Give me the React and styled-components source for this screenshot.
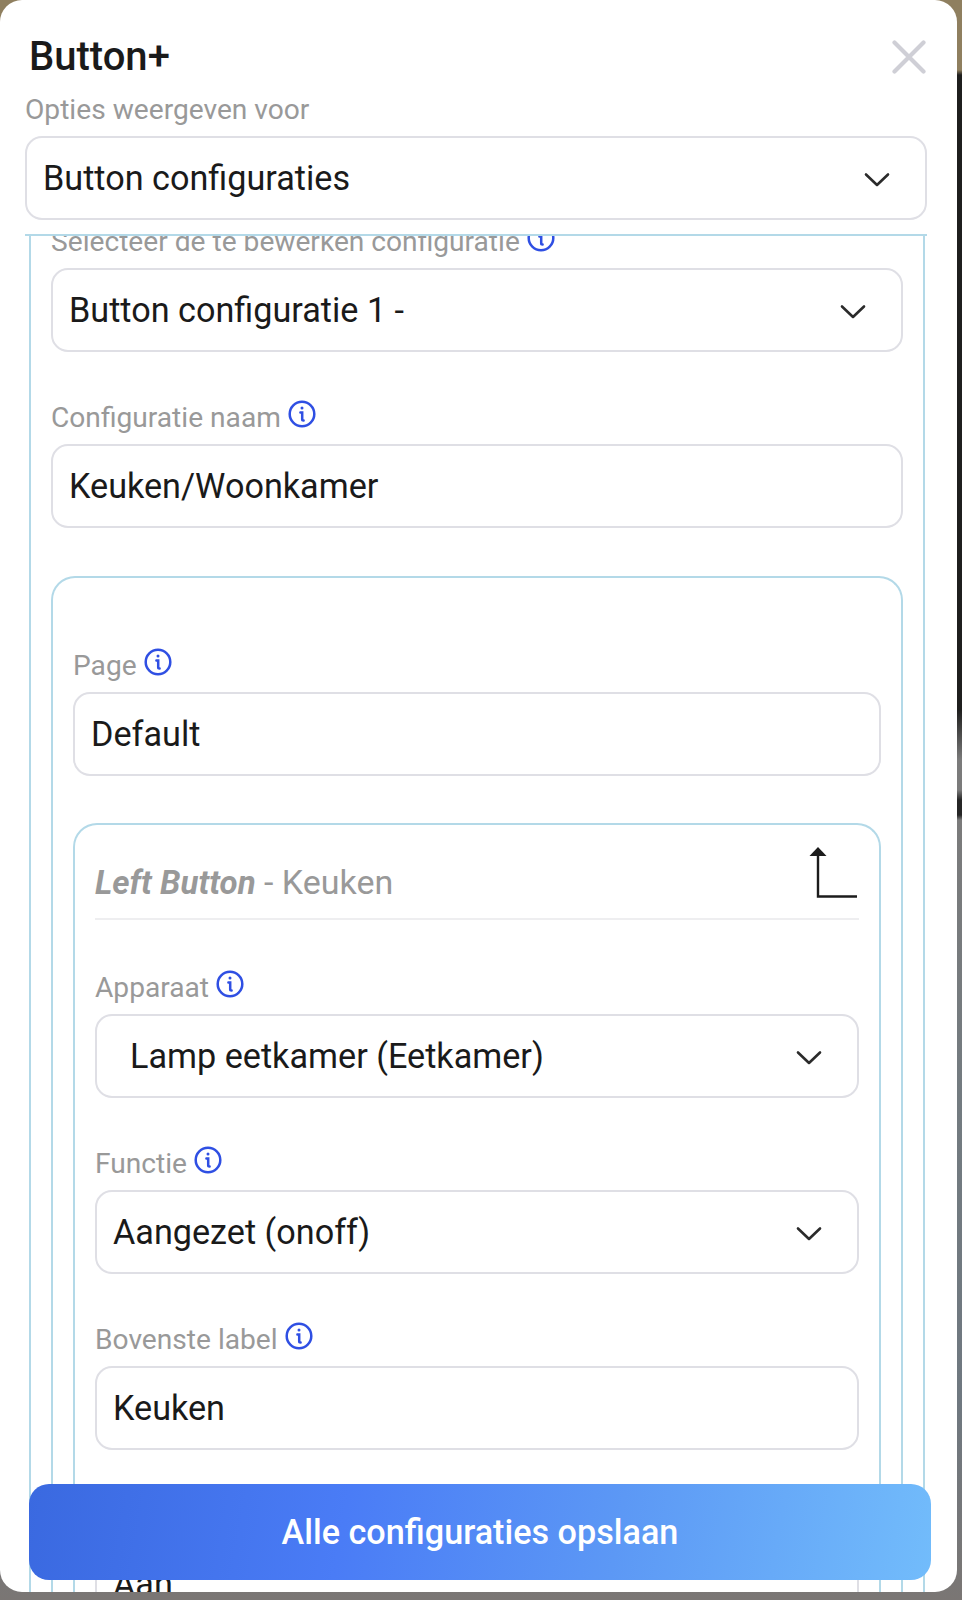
import React from "react";
import styled, { createGlobalStyle } from "styled-components";

const Global = createGlobalStyle`
  html, body { margin: 0; padding: 0; }
  body {
    width: 962px; height: 1600px; overflow: hidden;
    font-family: Roboto, "Noto Sans", sans-serif;
    background: linear-gradient(180deg, #8f7f5f 0, #8f7f5f 70px, #1f1f1e 75px, #1f1f1e 710px, #7b7b7b 760px, #7b7b7b 790px, #262626 800px, #262626 815px, #7b7b7b 820px, #737b80 1100px, #6f7880 1400px, #7a7674 1600px);
  }
`;

const Modal = styled.div`
  position: relative; width: 957px; height: 1592px; box-sizing: border-box;
  background: #fff; border-radius: 22px; overflow: hidden;
  display: flex; flex-direction: column; padding: 0 30px 0 25px;
`;
const Header = styled.div`
  display: flex; justify-content: space-between; align-items: center;
  height: 114px; padding-left: 4px; box-sizing: border-box; flex: none;
`;
const Title = styled.h1`
  margin: 0; font-size: 40px; font-weight: 500; color: #1a1a1a; line-height: 1;
`;
const Close = styled.button`
  border: 0; background: none; padding: 0; display: flex; margin-right: 1px;
`;
const TopLabel = styled.div`
  font-size: 28.15px; color: #999; line-height: 30px; margin-top: -19px; flex: none;
  height: 41px;
`;
const Box = styled.div`
  height: 84px; box-sizing: border-box; border: 2px solid #dfdfe5; border-radius: 17px;
  display: flex; align-items: center; justify-content: space-between;
  padding: 3px 34px 0 ${p => p.$pad || 16}px; background: #fff; flex: none;
  font-size: 34.2px; color: #1a1a1a;
`;
const BoxText = styled.span`
  margin-top: -4px;
`;
const Scroll = styled.div`
  flex: 1; min-height: 0; margin-top: 14px; border-top: 2px solid #b3d9e8;
  overflow: hidden; padding: 0 2px 0 4px;
`;
const Outer = styled.div`
  border: 2px solid #b3d9e8; border-top: 0; border-bottom: 0;
  padding: 0 20px; margin-top: -10px; height: 1500px;
`;
const Field = styled.div`
  display: flex; flex-direction: column; margin-bottom: ${p => p.$mb ?? 50}px;
`;
const Label = styled.div`
  display: flex; align-items: center; gap: 7px; height: 30px; margin-bottom: 12px;
  font-size: 28.15px; color: #999; white-space: nowrap;
  & > svg { margin-top: -7px; }
`;
const Card = styled.div`
  border: 2px solid #b3d9e8; border-radius: 24px; padding: ${p => p.$top}px 20px 0;
  border-bottom: 0;
`;
const CardHead = styled.div`
  display: flex; justify-content: space-between; align-items: flex-end;
  height: 95px; box-sizing: border-box; border-bottom: 2px solid #eeeef0;
  padding-bottom: 20px; margin-bottom: 52px;
  font-size: 34px; color: #999;
  & > svg { margin: 0 4px -1px 0; }
`;
const CardTitle = styled.div`
  line-height: 36px; margin-bottom: -3px;
  b { font-weight: 700; font-style: italic; font-size: 33px; }
`;
const SaveButton = styled.button`
  position: absolute; left: 29px; top: 1484px; width: 902px; height: 96px;
  border: 0; border-radius: 20px; color: #fff; font: 500 34.2px Roboto, sans-serif;
  background: linear-gradient(100deg, #3a69e0 0%, #4a7cf6 35%, #5c98f5 65%, #72bcfb 100%);
`;

const Info = () => (
  <svg width="28" height="28" viewBox="0 0 28 28" fill="none" stroke="#2f4fe3" strokeWidth="2.5" strokeLinecap="round">
    <circle cx="14" cy="14" r="12.3" />
    <path d="M12.4 12.6H14.2V19.4Q14.2 20.4 15.6 20.4" />
    <circle cx="14" cy="8" r="1.5" fill="#2f4fe3" stroke="none" />
  </svg>
);
const Chevron = () => (
  <svg width="28" height="16" viewBox="0 0 28 16" fill="none" stroke="#2b2b2b" strokeWidth="2.6" strokeLinecap="round" strokeLinejoin="round">
    <path d="M3 2.5 14 13 25 2.5" />
  </svg>
);
const X = () => (
  <svg width="34" height="34" viewBox="0 0 34 34" fill="none" stroke="#cfcfd6" strokeWidth="4.2" strokeLinecap="round">
    <path d="M2.5 2.5 31.5 31.5M31.5 2.5 2.5 31.5" />
  </svg>
);
const CornerArrow = () => (
  <svg width="44" height="52" viewBox="0 0 44 52" fill="none" overflow="visible">
    <path d="M7 8V49.5H46" stroke="#1c1c1c" strokeWidth="2.4" />
    <path d="M7 0 15.5 9H-1.5Z" fill="#1c1c1c" />
  </svg>
);

const Row = ({ label, value, select, pad, info = true, mb }) => (
  <Field $mb={mb}>
    <Label>{label}{info && <Info />}</Label>
    <Box $pad={pad}>
      <BoxText>{value}</BoxText>
      {select && <Chevron />}
    </Box>
  </Field>
);

export default function App() {
  return (
    <>
      <Global />
      <Modal>
        <Header>
          <Title>Button+</Title>
          <Close aria-label="Sluiten"><X /></Close>
        </Header>
        <TopLabel>Opties weergeven voor</TopLabel>
        <Box $pad={16}>
          <BoxText>Button configuraties</BoxText>
          <Chevron />
        </Box>
        <Scroll>
          <Outer>
            <Row label="Selecteer de te bewerken configuratie" value="Button configuratie 1 -" select />
            <Row label="Configuratie naam" value="Keuken/Woonkamer" mb={48} />
            <Card $top={72}>
              <Row label="Page" value="Default" mb={47} />
              <Card $top={0}>
                <CardHead>
                  <CardTitle><b>Left Button</b> - Keuken</CardTitle>
                  <CornerArrow />
                </CardHead>
                <Row label="Apparaat" value="Lamp eetkamer (Eetkamer)" select pad={33} />
                <Row label="Functie" value="Aangezet (onoff)" select />
                <Row label="Bovenste label" value="Keuken" />
                <Row label="Onderste label" value="Aan" info={false} />
              </Card>
            </Card>
          </Outer>
        </Scroll>
        <SaveButton>Alle configuraties opslaan</SaveButton>
      </Modal>
    </>
  );
}
